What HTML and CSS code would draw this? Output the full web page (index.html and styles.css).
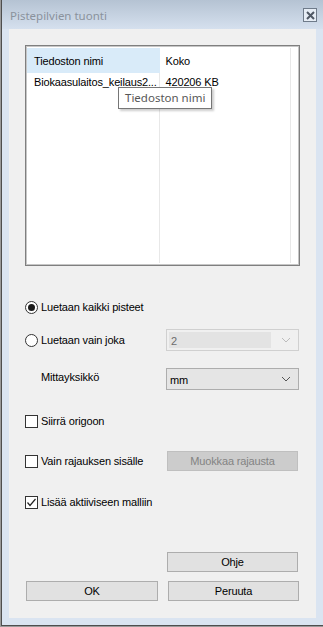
FILE: index.html
```html
<!DOCTYPE html>
<html lang="fi">
<head>
    <meta charset="UTF-8">
    <title>Pistepilvien tuonti</title>
    <link rel="stylesheet" href="styles.css">
</head>
<body>

    <div class="window">
        <!-- Title bar -->
        <div class="titlebar">
            <span class="title">Pistepilvien tuonti</span>
            <span class="close-btn">
                <svg width="9" height="9" viewBox="0 0 9 9"><path d="M1 1 L8 8 M8 1 L1 8" stroke="#4f5864" stroke-width="2"/></svg>
            </span>
        </div>

        <div class="client">
            <!-- File list -->
            <div class="list">
                <div class="list-row header">
                    <div class="col col-name hot">Tiedoston nimi</div>
                    <div class="col col-size">Koko</div>
                </div>
                <div class="list-row">
                    <div class="col col-name">Biokaasulaitos_keilaus2...</div>
                    <div class="col col-size">420206 KB</div>
                </div>
                <div class="list-fill">
                    <div class="col col-name"></div>
                    <div class="col col-size"></div>
                </div>
                <div class="tooltip">Tiedoston nimi</div>
            </div>

            <div class="options">
                <div class="row row-first">
                    <label class="opt"><span class="radio checked"></span>Luetaan kaikki pisteet</label>
                </div>
                <div class="row row-joka">
                    <label class="opt side"><span class="radio"></span>Luetaan vain joka</label>
                    <div class="combo disabled">
                        <span class="combo-text">2</span>
                        <svg class="chev" width="10" height="6" viewBox="0 0 10 6"><polyline points="1,1 5,5 9,1" fill="none" stroke="#bcbcbc" stroke-width="1"/></svg>
                    </div>
                </div>
                <div class="row row-unit">
                    <span class="side unit-label">Mittayksikkö</span>
                    <div class="combo">
                        <span class="combo-text">mm</span>
                        <svg class="chev" width="10" height="6" viewBox="0 0 10 6"><polyline points="1,1 5,5 9,1" fill="none" stroke="#555" stroke-width="1"/></svg>
                    </div>
                </div>
                <div class="row row-origin">
                    <label class="opt"><span class="check"></span>Siirrä origoon</label>
                </div>
                <div class="row row-crop">
                    <label class="opt side"><span class="check"></span>Vain rajauksen sisälle</label>
                    <button class="btn" disabled>Muokkaa rajausta</button>
                </div>
                <div class="row row-active">
                    <label class="opt"><span class="check checked">
                        <svg width="11" height="11" viewBox="0 0 11 11"><polyline points="1.5,5.5 4,8.5 9.5,2" fill="none" stroke="#222" stroke-width="1.2"/></svg>
                    </span>Lisää aktiiviseen malliin</label>
                </div>
            </div>

            <div class="buttons">
                <div class="btn-row">
                    <span class="btn-spacer"></span>
                    <button class="btn">Ohje</button>
                </div>
                <div class="btn-row">
                    <button class="btn btn-ok">OK</button>
                    <button class="btn">Peruuta</button>
                </div>
            </div>
        </div>
    </div>

</body>
</html>
```

FILE: styles.css
```css
body {
    margin: 0;
    padding: 0;
    background-color: #9a9a9a;
    font-family: "Liberation Sans", Arial, sans-serif;
    font-size: 11px;
    letter-spacing: -0.15px;
    color: #000;
}

.window {
    box-sizing: border-box;
    width: 322px;
    height: 626px;
    margin-left: 1px;
    border-left: 1px solid #4e4e4e;
    border-bottom: 1px solid #4e4e4e;
    background-color: #dae4f1;
    padding: 0 7px 7px 7px;
    display: flex;
    flex-direction: column;
}

.titlebar {
    height: 29px;
    margin: 0 -7px;
    padding: 0 6px 0 8px;
    display: flex;
    align-items: center;
    justify-content: space-between;
    background: linear-gradient(#b5c3d3, #d5e0ee);
}

.title {
    font-family: "Noto Sans", "Open Sans", sans-serif;
    letter-spacing: 0;
    color: #8a929c;
    font-size: 11.5px;
    margin-top: 2px;
}

.close-btn {
    box-sizing: border-box;
    width: 14px;
    height: 14px;
    border: 1px solid #6f7b8a;
    background-color: #e6edf5;
    display: flex;
    align-items: center;
    justify-content: center;
    margin-top: 1px;
}

.client {
    flex: 1;
    background-color: #f0f0f0;
    padding: 16px 0 0 16px;
    display: flex;
    flex-direction: column;
}

/* list view */
.list {
    position: relative;
    box-sizing: border-box;
    width: 275px;
    height: 221px;
    border: 1px solid #7f7f7f;
    box-shadow: inset 0 0 0 1px #c6c6c6;
    background-color: #fff;
    padding: 2px 8px 2px 1px;
    display: flex;
    flex-direction: column;
}

.list-row, .list-fill {
    display: flex;
}

.list-fill {
    flex: 1;
}

.col {
    box-sizing: border-box;
    padding-left: 7px;
    border-right: 1px solid #e8e8e8;
    white-space: nowrap;
    overflow: hidden;
}

.col-name {
    width: 133px;
}

.col-size {
    width: 132px;
    padding-left: 6px;
}

.header .col {
    height: 25px;
    line-height: 26px;
}

.header .hot {
    background-color: #d9ebf9;
    border-right-color: #d9ebf9;
}

.list-row:not(.header) .col {
    height: 19px;
    line-height: 18px;
}

.tooltip {
    position: absolute;
    left: 92px;
    top: 41px;
    padding: 0 6px;
    height: 20px;
    line-height: 19px;
    font-family: "Noto Sans", "Open Sans", sans-serif;
    font-size: 11.5px;
    letter-spacing: 0;
    background-color: #fff;
    border: 1px solid #767676;
    color: #575757;
    box-shadow: 2px 2px 2px rgba(0, 0, 0, 0.2);
}

/* options */
.options {
    display: flex;
    flex-direction: column;
}

.row {
    display: flex;
    align-items: center;
    height: 22px;
}

.row-first { margin-top: 30px; }
.row-joka { margin-top: 11px; }
.row-unit { margin-top: 17px; }
.row-origin { margin-top: 20px; }
.row-crop { margin-top: 18px; }
.row-active { margin-top: 19px; }

.opt {
    display: flex;
    align-items: center;
}

.side {
    width: 141px;
    flex-shrink: 0;
}

.unit-label {
    box-sizing: border-box;
    padding-left: 16px;
    margin-top: -5px;
}

.radio {
    box-sizing: border-box;
    width: 13px;
    height: 13px;
    border: 1px solid #333;
    border-radius: 50%;
    background-color: #fff;
    margin-right: 3px;
    display: flex;
    align-items: center;
    justify-content: center;
}

.radio.checked::after {
    content: "";
    width: 7px;
    height: 7px;
    border-radius: 50%;
    background-color: #1a1a1a;
}

.check {
    box-sizing: border-box;
    width: 13px;
    height: 13px;
    border: 1px solid #333;
    background-color: #fff;
    margin-right: 3px;
    display: flex;
    align-items: center;
    justify-content: center;
}

.combo {
    box-sizing: border-box;
    width: 133px;
    height: 22px;
    border: 1px solid #adadad;
    background-color: #e5e5e5;
    display: flex;
    align-items: center;
    justify-content: space-between;
    padding: 0 7px 0 3px;
}

.combo.disabled {
    border-color: #d0d0d0;
    background-color: #f0f0f0;
    padding: 2px 7px 2px 2px;
}

.combo.disabled .combo-text {
    flex: 1;
    align-self: stretch;
    background-color: #e3e3e3;
    color: #6d6d6d;
    line-height: 18px;
    padding-left: 2px;
    margin-right: 10px;
}

.row-unit .combo-text {
    margin-top: 2px;
}

.btn {
    box-sizing: border-box;
    width: 131px;
    height: 20px;
    padding: 0;
    margin: 0;
    font-family: inherit;
    font-size: 11px;
    letter-spacing: -0.15px;
    color: #000;
    background-color: #e1e1e1;
    border: 1px solid #adadad;
}

.btn:disabled {
    background-color: #cccccc;
    border-color: #bfbfbf;
    color: #838383;
    margin-left: 1px;
}

/* bottom buttons */
.buttons {
    margin-top: 39px;
    display: flex;
    flex-direction: column;
    gap: 9px;
}

.btn-row {
    display: flex;
    gap: 10px;
}

.btn-ok {
    width: 132px;
    margin-left: 1px;
}

.btn-spacer {
    width: 131px;
    margin-right: 1px;
}
```
